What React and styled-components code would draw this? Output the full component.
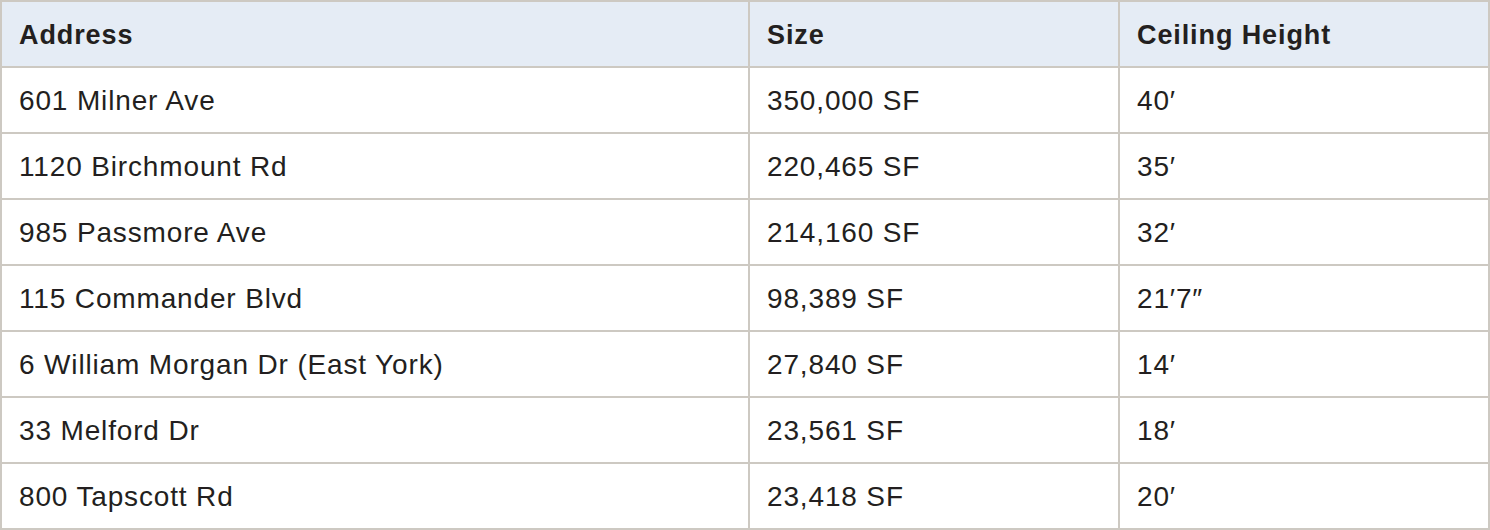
import React from "react";
import styled, { createGlobalStyle } from "styled-components";

const GlobalStyle = createGlobalStyle`
  html, body {
    margin: 0;
    padding: 0;
    background: #ffffff;
  }
  body {
    font-family: "Liberation Sans", Arial, sans-serif;
    color: #231f20;
  }
`;

const Table = styled.div`
  display: grid;
  grid-template-columns: 748px 370px 370px;
  width: 1490px;
  box-sizing: border-box;
  border-top: 2px solid #cdc9c2;
  border-left: 2px solid #cdc9c2;
`;

const Cell = styled.div`
  box-sizing: border-box;
  height: 66px;
  display: flex;
  align-items: center;
  padding: 2px 16px 0 17px;
  border-right: 2px solid #cdc9c2;
  border-bottom: 2px solid #cdc9c2;
  background: ${(p) => (p.$head ? "#e5ecf5" : "#ffffff")};
  font-size: ${(p) => (p.$head ? "27px" : "28px")};
  font-weight: ${(p) => (p.$head ? 700 : 400)};
  letter-spacing: ${(p) => (p.$head ? "0.9px" : "0.85px")};
  color: #231f20;
  white-space: nowrap;
`;

const headers = ["Address", "Size", "Ceiling Height"];

const rows = [
  ["601 Milner Ave", "350,000 SF", "40\u2032"],
  ["1120 Birchmount Rd", "220,465 SF", "35\u2032"],
  ["985 Passmore Ave", "214,160 SF", "32\u2032"],
  ["115 Commander Blvd", "98,389 SF", "21\u20327\u2033"],
  ["6 William Morgan Dr (East York)", "27,840 SF", "14\u2032"],
  ["33 Melford Dr", "23,561 SF", "18\u2032"],
  ["800 Tapscott Rd", "23,418 SF", "20\u2032"],
];

export default function App() {
  return (
    <>
      <GlobalStyle />
      <Table role="table">
        {headers.map((h) => (
          <Cell key={h} $head role="columnheader">
            {h}
          </Cell>
        ))}
        {rows.map((r) =>
          r.map((c, i) => (
            <Cell key={r[0] + i} role="cell">
              {c}
            </Cell>
          ))
        )}
      </Table>
    </>
  );
}
